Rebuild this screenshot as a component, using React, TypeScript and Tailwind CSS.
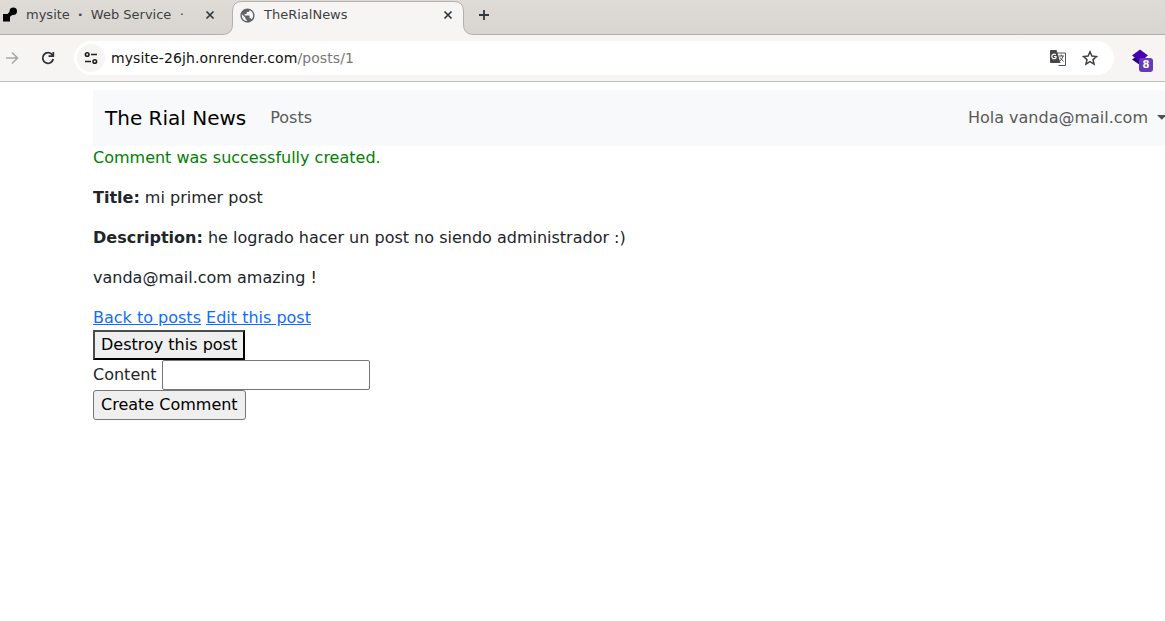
import React from "react";
import { MdPublic } from "react-icons/md";

function TabStrip() {
  return (
    <div className="relative flex h-[35px] shrink-0 bg-gradient-to-b from-[#dfdcd8] to-[#d8d4cf] font-[DejaVu_Sans,sans-serif] text-[13px] leading-[16px] text-[#3d4244]">
      <svg className="absolute left-0 top-0" width="1165" height="35" fill="none">
        <path d="M0 35V34.500H222C229 34.500 232.500 31 232.500 24V11Q232.500 1.500 242 1.500H454Q463.500 1.500 463.500 11V24C463.500 31 467 34.500 474 34.500H1165V35Z" fill="#f6f5f4" />
        <path d="M0 34.500H222C229 34.500 232.500 31 232.500 24V11Q232.500 1.500 242 1.500H454Q463.500 1.500 463.500 11V24C463.500 31 467 34.500 474 34.500H1165" stroke="#b3b0ac" />
      </svg>
      <div className="relative flex w-[232px] items-center pb-[5px] pl-[2px] pr-[17px]">
        <svg width="16" height="16" viewBox="0 0 16 16" fill="#000">
          <circle cx="11.300" cy="4.200" r="3.700" />
          <path d="M1 7H5.500L8 4.500L11 7.500L8 9.800V14.500H1Z" />
        </svg>
        <span className="ml-[8px] whitespace-pre">mysite</span>
        <span className="ml-[8px] w-[7px] font-bold">·</span>
        <span className="ml-[6px] mr-auto whitespace-pre">Web Service  ·</span>
        <CloseIcon />
      </div>
      <div className="relative flex w-[231px] items-center pb-[5px] pl-[7px] pr-[10px]">
        <MdPublic className="h-[17px] w-[17px] text-[#5f6368]" />
        <span className="ml-[8px] mr-auto">TheRialNews</span>
        <CloseIcon />
      </div>
      <svg className="relative ml-[15px] mt-[9px]" width="12" height="12" stroke="#30383b" strokeWidth="1.800">
        <path d="M6 1V11M1 6H11" />
      </svg>
    </div>
  );
}

function CloseIcon() {
  return (
    <svg width="10" height="10" viewBox="0 0 10 10" stroke="#30383b" strokeWidth="1.700">
      <path d="M1.500 1.500L8.500 8.500M8.500 1.500L1.500 8.500" />
    </svg>
  );
}

function Toolbar() {
  return (
    <div className="flex h-[47px] shrink-0 items-center border-b border-[#c2beb9] bg-[#f6f5f4]">
      <svg className="ml-[4px]" width="16" height="16" viewBox="0 0 16 16" fill="none" stroke="#a5a7a8" strokeWidth="1.600">
        <path d="M2 8H13.500M8 2.500L13.500 8L8 13.500" />
      </svg>
      <svg className="ml-[20px]" width="16" height="16" viewBox="0 0 16 16" fill="none" stroke="#2e3436" strokeWidth="1.800">
        <path d="M13.200 9A5.300 5.300 0 1 1 12.300 4.900L13.500 6" />
        <path d="M13.300 2V6.200H8.500" />
      </svg>
      <div className="ml-[18px] flex h-[34px] w-[1040px] items-center rounded-full bg-white pl-[3px] pr-[16px] font-[DejaVu_Sans,sans-serif] text-[14px] leading-5">
        <div className="flex h-[28px] w-[28px] items-center justify-center rounded-full bg-[#f6f5f4]">
          <svg width="14" height="14" viewBox="0 0 14 14" fill="none" stroke="#202124" strokeWidth="1.600">
            <circle cx="3.200" cy="3.500" r="1.800" />
            <circle cx="10.800" cy="10.500" r="1.800" />
            <path d="M7 3.500H13M1 10.500H7" />
          </svg>
        </div>
        <span className="ml-[6px] mr-auto tracking-[0.1px] text-[#111]">
          mysite-26jh.onrender.com<span className="text-[#777]">/posts/1</span>
        </span>
        <svg width="18" height="18" viewBox="0 0 18 18">
          <path d="M7 4H16.500V16.500H9.500" fill="white" stroke="#555" />
          <path d="M1 2Q1 1 2 1H7.500L11.500 14H2Q1 14 1 13Z" fill="#474747" />
          <path d="M6.800 5.800A2.300 2.300 0 1 0 7 8.800V7.500H5" fill="none" stroke="white" strokeWidth="1.200" />
          <path d="M9.500 7H15M12.300 5.500V7M14 7Q13 10.500 11 12M11 8.500L14.500 12.500" fill="none" stroke="#555" />
        </svg>
        <svg className="ml-[15px]" width="16" height="16" viewBox="0 0 16 16" fill="none" stroke="#404346" strokeWidth="1.500">
          <path d="M8 1.800L9.900 6.100L14.500 6.500L11 9.600L12.100 14.200L8 11.700L3.900 14.200L5 9.600L1.500 6.500L6.100 6.100Z" />
        </svg>
      </div>
      <div className="relative ml-[17px] h-[24px] w-[24px]">
        <svg className="mt-[3px]" width="18" height="18" viewBox="0 0 18 18">
          <path d="M1 10.500L9 5L17 10.500L9 16Z" fill="#22007a" />
          <path d="M9 0.500L17 6.500L9 12.500L1 6.500Z" fill="#4700b3" />
        </svg>
        <span className="absolute left-[8px] top-[12px] flex h-[14px] w-[14px] items-center justify-center rounded-[3px] bg-[#673ab7] font-[DejaVu_Sans,sans-serif] text-[10px] font-bold leading-none text-white">8</span>
      </div>
    </div>
  );
}

export default function App() {
  return (
    <div className="flex h-[621px] w-[1165px] flex-col overflow-hidden bg-white">
      <TabStrip />
      <Toolbar />
      <main className="ml-[93px] pt-2 font-[DejaVu_Sans,sans-serif] text-base text-[#212529]">
        <nav className="flex h-14 items-center bg-[#f8f9fa] pl-3 text-[#595a5a]">
          <a className="text-[20px] text-black">The Rial News</a>
          <a className="ml-6 mr-auto">Posts</a>
          <a>Hola vanda@mail.com</a>
          <svg className="mb-[2px] ml-[9px]" width="8" height="5" fill="#4f5152"><path d="M0 0H9.600L4.800 4.800Z" /></svg>
        </nav>
        <p className="mb-4 text-[#008000]">Comment was successfully created.</p>
        <p className="mb-4"><strong>Title:</strong> mi primer post</p>
        <p className="mb-4"><strong>Description:</strong> he logrado hacer un post no siendo administrador :)</p>
        <p className="mb-4">vanda@mail.com amazing !</p>
        <div className="text-[#0d6efd]"><a className="underline">Back to posts</a> <a className="underline">Edit this post</a></div>
        <button className="block h-[30px] border-2 border-[#000] border-l-[#4c4c4c] border-t-[#4c4c4c] bg-[#efefef] px-[6px] leading-6 text-black">Destroy this post</button>
        <div className="flex h-[30px] items-center">
          <label className="mr-[5px]">Content</label>
          <input className="h-[30px] w-[208px] rounded-[2px] border border-[#767676] bg-white px-1" />
        </div>
        <button className="block h-[30px] rounded-[3px] border border-[#767676] bg-[#efefef] px-[7px] leading-6 text-black">Create Comment</button>
      </main>
    </div>
  );
}
